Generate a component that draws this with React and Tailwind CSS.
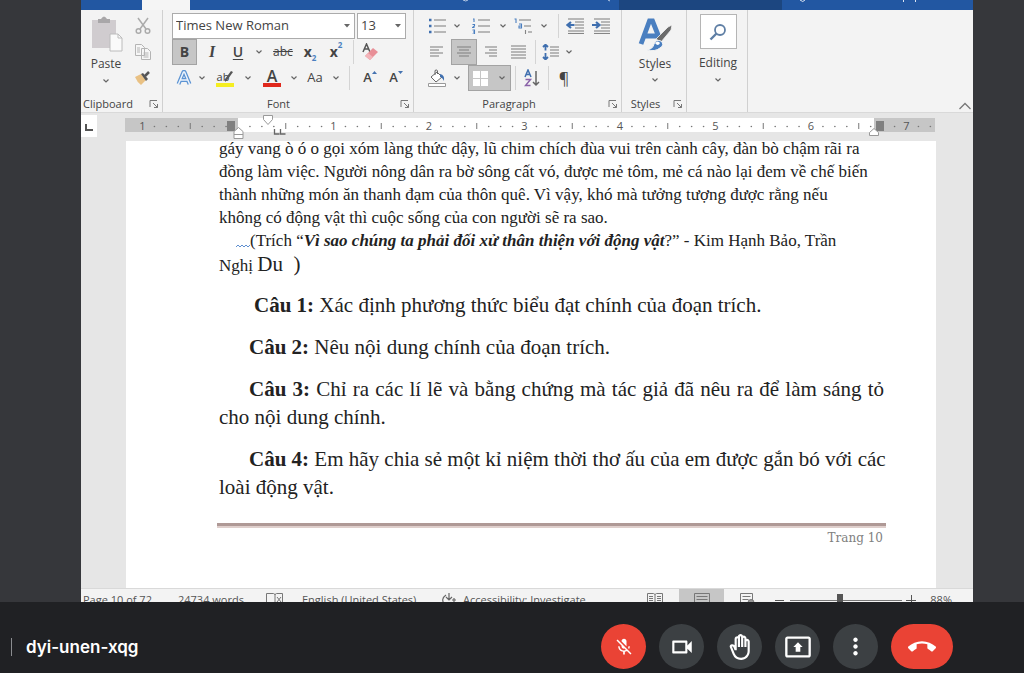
import clsx from "clsx";
import {
  MdCallEnd,
  MdMicOff,
  MdMoreVert,
  MdOutlineBackHand,
  MdOutlinePresentToAll,
  MdOutlineVideocam,
} from "react-icons/md";

function Chevron() {
  return (
    <svg viewBox="0 0 8 6" className="w-2 h-1.5 shrink-0" fill="none" stroke="#666" strokeWidth="1.2">
      <path d="M1.5 1.5 4 4 6.5 1.5" />
    </svg>
  );
}

function Tool({ label, className, active, children }) {
  return (
    <button
      type="button"
      aria-label={label}
      className={clsx(
        "h-[26px] shrink-0 flex items-center justify-center",
        active && "bg-[#c6c6c6] border border-[#a3a3a3]",
        className
      )}
    >
      {children}
    </button>
  );
}

function More({ label, className = "w-3" }) {
  return (
    <Tool label={label} className={className}>
      <Chevron />
    </Tool>
  );
}

function Divider({ className }) {
  return (
    <span className={clsx("h-6 shrink-0 flex justify-center", className)}>
      <span className="w-px h-full bg-[#d4d4d4]" />
    </span>
  );
}

function GroupLabel({ children, className, align = "text-center" }) {
  return (
    <div className={clsx("flex-1 flex items-end text-[11px] leading-4 text-[#444]", className)}>
      <span className={clsx("flex-1", align)}>{children}</span>
      <button type="button" aria-label={`${children} settings`} className="pb-[3px]">
        <svg viewBox="0 0 10 10" className="w-2.5 h-2.5" fill="none" stroke="#777">
          <path d="M1 8V1.5h7M4 4l4.5 4.5M8.5 5v3.5H5" />
        </svg>
      </button>
    </div>
  );
}

function Lines({ rows, className = "w-[18px] h-4", children }) {
  return (
    <svg viewBox="0 0 18 16" className={className} fill="none" stroke="#858585" strokeWidth="1.1">
      {rows.map(([x1, x2, y]) => (
        <path key={y} d={`M${x1} ${y}H${x2}`} />
      ))}
      {children}
    </svg>
  );
}

function TitleBar() {
  return (
    <div className="h-2.5 flex bg-[#2257a2]">
      <div className="w-[61px]" />
      <div className="w-12 bg-[#f5f5f5]" />
      <div className="w-[429px]">
        <svg viewBox="0 0 429 10" className="w-full h-full" fill="none" stroke="#b9cbe5">
          <path d="M273 0q3 2 5 0M418 0l2 1" />
        </svg>
      </div>
      <div className="w-[163px] bg-[#1c4680]" />
      <svg viewBox="0 0 190 10" className="w-[190px] h-full" fill="none" stroke="#dbe5f3">
        <path d="M18 0q3 3 5 0M121.500 0v2M133.500 0v2" />
      </svg>
    </div>
  );
}

function Clipboard() {
  return (
    <section className="w-[82px] flex flex-col border-r border-[#d0d0d0]">
      <div className="h-[81px] flex">
        <button type="button" className="w-[50px] pt-1.5 flex flex-col items-center text-xs text-[#444]">
          <svg viewBox="0 0 34 38" className="w-[34px] h-[38px] shrink-0">
            <path d="M3 4h24v28H3z" fill="#d0cccf" />
            <path d="M9 3h3q3-5 6 0h3v4H9z" fill="#a9a7a9" />
            <path d="M21 18h8l4 4v13H21z" fill="#fafafa" stroke="#bcbcbc" />
            <path d="M29 18v4h4" fill="none" stroke="#bcbcbc" />
          </svg>
          <span className="leading-5">Paste</span>
          <span className="pt-1"><Chevron /></span>
        </button>
        <div className="w-6 pt-[3px] flex flex-col items-center">
          <Tool label="Cut" className="w-6">
            <svg viewBox="0 0 16 18" className="w-4 h-[18px]" fill="none" stroke="#aaa" strokeWidth="1.500">
              <path d="M3 1l8 11M13 1L5 12" />
              <circle cx="3.500" cy="14" r="2.300" />
              <circle cx="12.500" cy="14" r="2.300" />
            </svg>
          </Tool>
          <Tool label="Copy" className="w-6">
            <svg viewBox="0 0 18 18" className="w-[18px] h-[18px]" fill="#f6f6f6" stroke="#b4b4b4">
              <path d="M1.500 1.500h6l3 3v8h-9zM7.500 5.500h6l3 3v8h-9z" />
              <path d="M3 5h3M3 7h3M3 9h3M9.500 10h5M9.500 12h5M9.500 14h5" />
            </svg>
          </Tool>
          <Tool label="Format Painter" className="w-6">
            <svg viewBox="0 0 16 16" className="w-4 h-4">
              <path d="M0 7l6-3 5 6-5 5q-4-3-6-8z" fill="#e9c184" />
              <path d="M6 4l2-1 5 6-2 2z" fill="#555" />
              <path d="M10 6l4-4" stroke="#555" strokeWidth="2.500" />
            </svg>
          </Tool>
        </div>
      </div>
      <GroupLabel align="text-left" className="pl-0.5 pr-[3px]">Clipboard</GroupLabel>
    </section>
  );
}

function SelectBox({ label, value, className }) {
  return (
    <label className={clsx("relative h-[26px] flex bg-white border border-[#ababab]", className)}>
      <select
        aria-label={label}
        defaultValue={value}
        className="w-full appearance-none bg-transparent pl-[3px] text-[13px] text-[#444] outline-none"
      >
        <option>{value}</option>
      </select>
      <svg viewBox="0 0 6 4" className="absolute right-1 top-2.5 w-1.5 h-1 pointer-events-none" fill="#666">
        <path d="M0 0h6L3 3.500z" />
      </svg>
    </label>
  );
}

function FontGroup() {
  return (
    <section className="w-[251px] pl-[9px] flex flex-col border-r border-[#d0d0d0] text-[#444]">
      <div className="mt-[3px] flex gap-0.5">
        <SelectBox label="Font" value="Times New Roman" className="w-[183px]" />
        <SelectBox label="Font Size" value="13" className="w-[49px]" />
      </div>
      <div className="flex items-center">
        <Tool label="Bold" active className="w-[25px] text-sm font-bold">B</Tool>
        <Tool label="Italic" className="w-[30px] font-['Liberation_Serif',serif] text-base font-bold italic">I</Tool>
        <Tool label="Underline" className="w-[22px] text-sm font-semibold underline underline-offset-2">U</Tool>
        <More label="Underline style" className="w-5" />
        <Tool label="Strikethrough" className="w-7 text-xs line-through">abc</Tool>
        <Tool label="Subscript" className="w-[26px] text-sm font-bold">
          x<sub className="pt-2 text-[8px] text-[#4a7fc0]">2</sub>
        </Tool>
        <Tool label="Superscript" className="w-[26px] text-sm font-bold">
          x<sup className="pb-1.5 text-[8px] text-[#4a7fc0]">2</sup>
        </Tool>
        <Divider className="w-2" />
        <Tool label="Clear Formatting" className="w-7">
          <svg viewBox="0 0 18 18" className="w-[18px] h-[18px]" fill="none">
            <path d="M1 9 4.500 1 8 9M2.500 6h4" stroke="#555" strokeWidth="1.500" />
            <path d="M3 13l8-8 5 4-8 8z" fill="#e88f97" />
            <path d="M3 13l3-3 5 4-3 3z" fill="#f3b4b9" />
          </svg>
        </Tool>
      </div>
      <div className="flex items-center">
        <Tool label="Text Effects" className="w-6">
          <svg viewBox="0 0 16 16" className="w-4 h-4 overflow-visible" fill="none" strokeLinejoin="round">
            <path d="M2.500 14 7.500 2h1l5 12M4.500 10h7" stroke="#5b93d3" strokeWidth="4" />
            <path d="M2.500 14 7.500 2h1l5 12M4.500 10h7" stroke="#eef4fb" strokeWidth="1.500" />
          </svg>
        </Tool>
        <More label="Text effect options" />
        <Tool label="Highlight" className="w-[34px]">
          <span className="flex flex-col items-center">
            <span className="flex text-[11px] leading-[13px]">
              ab
              <svg viewBox="0 0 8 13" className="w-2 h-[13px] -ml-1" fill="#555">
                <path d="M8 2 3 9l-3 3V9l6-8z" />
              </svg>
            </span>
            <span className="w-[18px] h-1 bg-[#f5ee21]" />
          </span>
        </Tool>
        <More label="Highlight color" />
        <Tool label="Font Color" className="w-9">
          <span className="flex flex-col items-center">
            <span className="text-base leading-[14px] font-semibold">A</span>
            <span className="w-[18px] h-1 bg-[#e0281c]" />
          </span>
        </Tool>
        <More label="Font color options" className="w-2" />
        <Tool label="Change Case" className="w-[34px] text-[13px]">Aa</Tool>
        <More label="Case options" className="w-2" />
        <Divider className="w-[18px]" />
        <Tool label="Grow Font" className="w-6 text-[13px] font-semibold">
          A
          <svg viewBox="0 0 5 3" className="w-[5px] h-[3px] mb-3" fill="#4472b0"><path d="M0 3 2.500 0 5 3z" /></svg>
        </Tool>
        <Tool label="Shrink Font" className="w-7 text-[13px] font-semibold">
          A
          <svg viewBox="0 0 5 3" className="w-[5px] h-[3px] mb-3" fill="#4472b0"><path d="M0 0h5L2.500 3z" /></svg>
        </Tool>
      </div>
      <GroupLabel className="-ml-[15px] pr-[3px]">Font</GroupLabel>
    </section>
  );
}

function ParagraphGroup() {
  return (
    <section className="w-[208px] pl-2.5 flex flex-col border-r border-[#d0d0d0] text-[#444]">
      <div className="mt-[3px] flex items-center">
        <Tool label="Bullets" className="w-[26px]">
          <Lines rows={[[6, 18, 2], [6, 18, 8], [6, 18, 14]]}>
            <path d="M1 2h2.500M1 8h2.500M1 14h2.500" stroke="#3f6faf" strokeWidth="2.500" />
          </Lines>
        </Tool>
        <More label="Bullet options" className="w-3.5" />
        <Tool label="Numbering" className="w-[34px]">
          <Lines rows={[[6, 18, 2], [6, 18, 8], [6, 18, 14]]}>
            <path d="M1 1h1v3M.500 6.500h2v1.500l-2 1.500h2M.500 12h2v4h-2M1 14h1.500" stroke="#4a7fc0" />
          </Lines>
        </Tool>
        <More label="Numbering options" className="w-2.5" />
        <Tool label="Multilevel List" className="w-[30px]">
          <Lines rows={[[5, 17, 2], [10, 17, 8], [14, 18, 14]]}>
            <path d="M.500 1h1.500v4M5 6h2.500v4H5V8h2" stroke="#4a7fc0" />
            <path d="M11.500 12v4" />
          </Lines>
        </Tool>
        <More label="List options" />
        <Divider className="w-4" />
        <Tool label="Decrease Indent" className="w-[18px]">
          <Lines rows={[[2, 18, 1], [9, 18, 4], [9, 18, 7], [9, 18, 10], [2, 18, 13], [2, 18, 15.5]]}>
            <path d="M8.500 7H2M5 4 1.500 7 5 10" stroke="#3f6faf" strokeWidth="2.200" />
          </Lines>
        </Tool>
        <Tool label="Increase Indent" className="w-[34px]">
          <Lines rows={[[2, 18, 1], [9, 18, 4], [9, 18, 7], [9, 18, 10], [2, 18, 13], [2, 18, 15.5]]}>
            <path d="M0 7h6.500M4 4 7.500 7 4 10" stroke="#3f6faf" strokeWidth="2.200" />
          </Lines>
        </Tool>
      </div>
      <div className="flex items-center">
        <Tool label="Align Left" className="w-[27px]">
          <Lines rows={[[1, 14, 3], [1, 10, 6], [1, 14, 9], [1, 10, 12]]} />
        </Tool>
        <Tool label="Center" active className="w-[26px]">
          <Lines rows={[[2, 16, 3], [4, 14, 6], [2, 16, 9], [4, 14, 12]]} />
        </Tool>
        <Tool label="Align Right" className="w-7">
          <Lines rows={[[3, 15, 3], [7, 15, 6], [3, 15, 9], [7, 15, 12]]} />
        </Tool>
        <Tool label="Justify" className="w-[26px]">
          <Lines rows={[[2, 17, 2], [2, 17, 5], [2, 17, 8], [2, 17, 11], [2, 17, 14]]} />
        </Tool>
        <Divider className="w-2" />
        <Tool label="Line Spacing" className="w-6">
          <Lines rows={[[8, 17, 3], [8, 17, 6], [8, 17, 9], [8, 17, 12]]}>
            <path d="M3.500 0v6.500M1 3l2.500-2.500L6 3M3.500 9v7M1 13l2.500 2.500L6 13" stroke="#3f6faf" strokeWidth="1.800" />
          </Lines>
        </Tool>
        <More label="Line spacing options" />
      </div>
      <div className="flex items-center">
        <Tool label="Shading" className="w-[26px]">
          <svg viewBox="0 0 18 18" className="w-[18px] h-[18px]" fill="none">
            <path d="M3 8l6-5 5 5-6 5z" fill="#fff" stroke="#666" />
            <path d="M7 6V1.500q2-1.500 2.500.500V5" stroke="#666" />
            <path d="M12 5q5 1 4 7-2-4-4-4z" fill="#3f6faf" />
            <path d="M.500 14.500h17v3H.500z" fill="#fff" stroke="#999" />
          </svg>
        </Tool>
        <More label="Shading color" className="w-3.5" />
        <Tool label="Borders" active className="w-[43px] ml-1 gap-2.5">
          <svg viewBox="0 0 15 15" className="w-[15px] h-[15px]" fill="#fff">
            <path d="M0 0h7v7H0zM8 0h7v7H8zM0 8h7v7H0zM8 8h7v7H8z" />
          </svg>
          <Chevron />
        </Tool>
        <Divider className="w-2" />
        <Tool label="Sort" className="w-[26px]">
          <svg viewBox="0 0 16 18" className="w-4 h-[18px]" fill="none" strokeWidth="1.500">
            <path d="M1 8 4 1l3 7M2 5.500h4" stroke="#3f6faf" />
            <path d="M1.500 10.500h5l-5 6h5" stroke="#8a62a8" />
            <path d="M12 2v14M9 13l3 3 3-3" stroke="#666" />
          </svg>
        </Tool>
        <Divider className="w-1.5" />
        <Tool label="Show paragraph marks" className="w-[26px] text-base">¶</Tool>
      </div>
      <GroupLabel className="-ml-3.5 pr-[3px]">Paragraph</GroupLabel>
    </section>
  );
}

function StylesGroup() {
  return (
    <section className="w-[65px] pl-0.5 flex flex-col border-r border-[#d0d0d0] text-[#444]">
      <button type="button" className="h-[81px] pt-[7px] flex flex-col items-center text-xs">
        <svg viewBox="0 0 34 36" className="w-[34px] h-9 shrink-0" fill="none">
          <path d="M3 27 11.500 4h3l8 20M6 19h13" stroke="#4a7fc0" strokeWidth="4.800" />
          <path d="M18 22 30 10l4-2-1 5-10 12z" fill="#6b6b6b" stroke="#f3f3f3" strokeWidth=".800" />
          <path d="M9 33q6-1 7-6 2-5 7-3 4 4-1 7-5 4-13 2z" fill="#4a7fc0" stroke="#f3f3f3" />
          <path d="M17 26q3-3 5 0-2 4-5 0z" fill="#fff" />
        </svg>
        <span className="leading-[22px]">Styles</span>
        <span className="pt-0.5"><Chevron /></span>
      </button>
      <GroupLabel className="-ml-1.5 pr-[3px]">Styles</GroupLabel>
    </section>
  );
}

function Ribbon() {
  return (
    <div className="h-[103px] flex bg-[#f3f3f3] border-b border-[#d9d9d9] font-['Open_Sans',sans-serif]">
      <Clipboard />
      <FontGroup />
      <ParagraphGroup />
      <StylesGroup />
      <section className="w-[61px] border-r border-[#d0d0d0] text-[#444]">
        <button type="button" className="w-full pt-1 pl-0.5 flex flex-col items-center text-xs">
          <span className="w-[37px] h-[35px] flex items-center justify-center bg-white border border-[#b5b5b5]">
            <svg viewBox="0 0 18 18" className="w-[18px] h-[18px]" fill="none" stroke="#5f7fa5" strokeWidth="1.800">
              <circle cx="11" cy="7" r="5" />
              <path d="m7.500 10.500-6 6" strokeWidth="2.400" />
            </svg>
          </span>
          <span className="pt-0.5 leading-6">Editing</span>
          <span className="pt-0.5"><Chevron /></span>
        </button>
      </section>
      <div className="flex-1 flex items-end justify-end pr-0.5 pb-0.5">
        <button type="button" aria-label="Collapse the Ribbon">
          <svg viewBox="0 0 12 8" className="w-3 h-2" fill="none" stroke="#777" strokeWidth="1.300">
            <path d="m.500 7 5.500-5.500L11.500 7" />
          </svg>
        </button>
      </div>
    </div>
  );
}

const INCH = 95.5;
const ZERO = 113;

function Ruler() {
  const marks = [];
  for (let i = -8; i <= 58; i++) {
    const x = ZERO + (i * INCH) / 8;
    if (i === 0) continue;
    if (i % 8 === 0) {
      marks.push(
        <text key={i} x={x} y="17" textAnchor="middle" fontSize="11" fill="#555">
          {Math.abs(i / 8)}
        </text>
      );
    } else if (i % 4 === 0) {
      marks.push(<path key={i} d={`M${x} 10v6`} stroke="#777" />);
    } else {
      marks.push(<circle key={i} cx={x} cy="13.5" r="0.8" fill="#777" />);
    }
  }
  return (
    <div className="h-7 flex bg-[#e6e6e6]">
      <div className="w-4 h-[22px] mt-0.5 pt-1 flex items-center justify-center bg-white">
        <svg viewBox="0 0 8 8" className="w-2 h-2" fill="none" stroke="#555" strokeWidth="2">
          <path d="M1 0v6h7" />
        </svg>
      </div>
      <svg viewBox="0 0 811 28" className="w-[811px] h-7 ml-7 font-['Open_Sans',sans-serif]">
        <path d="M0 5h113v14H0zM749 5h61v14h-61z" fill="#c6c6c6" />
        <path d="M113 5h636v14H113z" fill="#fff" />
        {marks}
        <path d="M102 8h8v10h-8zM751 8h8v10h-8z" fill="#808080" />
        <g fill="#fff" stroke="#999">
          <path d="M138.500 2.500h9v4l-4.500 5-4.500-5z" />
          <path d="m113.500 14.500 4.500 4v7h-9v-7zM109 21.500h9" />
          <path d="m749 15.500 4.500 4v3h-9v-3z" />
        </g>
        <path d="M149.500 16v5h5M155.500 16v5h5" fill="none" stroke="#666" strokeWidth="1.300" />
      </svg>
    </div>
  );
}

function Question({ n, className = "indent-[30px] text-justify", children }) {
  return (
    <p className={clsx("text-[21px] leading-7", className)}>
      <b>Câu {n}:</b> {children}
    </p>
  );
}

function Page() {
  return (
    <main className="flex-1 min-h-0 overflow-hidden pl-[45px] pr-[37px] flex bg-[#e6e6e6]">
      <article className="flex-1 pl-[93px] pr-[52px] bg-white text-[#222] font-['Liberation_Serif',serif]">
        <div className="-mt-1 text-[17px] leading-[23px] whitespace-nowrap">
          <p>
            gáy vang ò ó o gọi xóm làng thức dậy, lũ chim chích đùa vui trên cành cây, đàn bò chậm rãi ra<br />
            đồng làm việc. Người nông dân ra bờ sông cất vó, được mẻ tôm, mẻ cá nào lại đem về chế biến<br />
            thành những món ăn thanh đạm của thôn quê. Vì vậy, khó mà tưởng tượng được rằng nếu<br />
            không có động vật thì cuộc sống của con người sẽ ra sao.
          </p>
          <p className="pl-[17px] flex">
            <svg viewBox="0 0 14 23" className="w-3.5 h-[23px]" fill="none" stroke="#5f8fd0">
              <path d="m0 18 2-2 2 2 2-2 2 2 2-2 2 2 2-2" />
            </svg>
            <span>
              (Trích “<b><i>Vì sao chúng ta phải đối xử thân thiện với động vật</i></b>?” - Kim Hạnh Bảo, Trần
            </span>
          </p>
          <p className="leading-6">
            Nghị <span className="text-[21px] leading-6 whitespace-pre">Du  )</span>
          </p>
        </div>
        <div className="mt-[13px] flex flex-col gap-3.5">
          <Question n={1} className="indent-[35px]">Xác định phương thức biểu đạt chính của đoạn trích.</Question>
          <Question n={2}>Nêu nội dung chính của đoạn trích.</Question>
          <Question n={3}>
            Chỉ ra các lí lẽ và bằng chứng mà tác giả đã nêu ra để làm sáng tỏ cho nội dung chính.
          </Question>
          <Question n={4} className="-mr-4 indent-[30px]">
            Em hãy chia sẻ một kỉ niệm thời thơ ấu của em được gắn bó với các<br />
            loài động vật.
          </Question>
        </div>
        <footer className="mt-[22px] -mx-0.5">
          <div className="h-[5px] bg-[#af9996] border-b-2 border-[#dfcfcc]" />
          <p className="pr-[3px] text-right text-xs leading-5 text-[#808080] font-['DejaVu_Serif',serif]">Trang 10</p>
        </footer>
      </article>
    </main>
  );
}

function StatusBar() {
  return (
    <div className="h-3.5 shrink-0 overflow-hidden bg-[#f3f3f3] border-t border-[#d9d9d9]">
      <div className="h-[22px] pl-0.5 pr-[21px] flex items-center whitespace-nowrap text-[11px] text-[#555] font-['Open_Sans',sans-serif]">
        <span className="w-[95px]">Page 10 of 72</span>
        <span className="w-[88px]">24734 words</span>
        <svg viewBox="0 0 18 14" className="w-[18px] h-3.5 mr-[18px]" fill="none" stroke="#777">
          <path d="M.500 .500h7l1.500 1 1.500-1h6v13H.500zM9 1v12M11 4l4 5M15 4l-4 5" />
        </svg>
        <span className="w-[139px]">English (United States)</span>
        <svg viewBox="0 0 16 14" className="w-4 h-3.5 mr-1.5" fill="none" stroke="#666" strokeWidth="1.200">
          <path d="M4 12Q-1 6 5 2M8 0v6M5 4l3 3 3-3M11 7h4M13 5v4" />
        </svg>
        <span>Accessibility: Investigate</span>
        <span className="flex-1" />
        <button type="button" aria-label="Read Mode" className="mr-4">
          <svg viewBox="0 0 16 14" className="w-4 h-3.5" fill="none" stroke="#777">
            <path d="M.500 .500h6L8 1.500l1.500-1h6v13H.500zM8 1.500V14M2 3.500h4M2 5.500h4M2 7.500h4M10 3.500h4M10 5.500h4M10 7.500h4" />
          </svg>
        </button>
        <button type="button" aria-label="Print Layout" className="w-[45px] h-[22px] mr-4 flex items-center justify-center bg-[#c6c6c6]">
          <svg viewBox="0 0 16 14" className="w-4 h-3.5" fill="none" stroke="#777">
            <path d="M.500 .500h15v13H.500zM2.500 3.500h11M2.500 6.500h11M2.500 9.500h11" />
          </svg>
        </button>
        <button type="button" aria-label="Web Layout" className="mr-5">
          <svg viewBox="0 0 15 14" className="w-[15px] h-3.5" fill="none" stroke="#777">
            <path d="M.500 .500h12v13H.500zM2.500 3.500h8M2.500 6.500h6" />
            <circle cx="11" cy="9.500" r="3" fill="#999" />
          </svg>
        </button>
        <button type="button" aria-label="Zoom Out" className="w-[9px] h-px mr-1.5 bg-[#555]" />
        <input
          type="range"
          aria-label="Zoom"
          min="0"
          max="100"
          defaultValue="44"
          className="w-28 h-px appearance-none bg-[#777] [&::-webkit-slider-thumb]:appearance-none [&::-webkit-slider-thumb]:w-1.5 [&::-webkit-slider-thumb]:h-3 [&::-webkit-slider-thumb]:bg-[#555]"
        />
        <button type="button" aria-label="Zoom In" className="ml-1 mr-3.5">
          <svg viewBox="0 0 10 10" className="w-2.5 h-2.5" stroke="#555"><path d="M0 5.500h10M5.500 0v10" /></svg>
        </button>
        <span>88%</span>
      </div>
    </div>
  );
}

const controls = [
  { label: "Turn on microphone", icon: MdMicOff, size: "w-5 h-5", className: "w-[45px] bg-[#ea4335]" },
  { label: "Turn off camera", icon: MdOutlineVideocam, size: "w-[26px] h-[26px]", className: "w-[45px] bg-[#3c4043]" },
  { label: "Raise hand", icon: MdOutlineBackHand, size: "w-[26px] h-[26px]", className: "w-[45px] bg-[#3c4043]" },
  { label: "Present now", icon: MdOutlinePresentToAll, size: "w-7 h-7", className: "w-[45px] bg-[#3c4043]" },
  { label: "More options", icon: MdMoreVert, size: "w-[27px] h-[27px]", className: "w-[45px] bg-[#3c4043]" },
  { label: "Leave call", icon: MdCallEnd, size: "w-7 h-7", className: "w-[62px] bg-[#ea4335]" },
];

function CallBar() {
  return (
    <div className="h-[71px] shrink-0 pt-[18px] pl-[11px] pr-[71px] flex items-center justify-between bg-[#202124] text-white">
      <div className="flex items-center gap-3.5">
        <span className="w-px h-[18px] bg-[#8b8d90]" />
        <h1 className="font-['Inter',sans-serif] text-[17px] leading-6 font-semibold">dyi-unen-xqg</h1>
      </div>
      <div className="flex gap-[13px]">
        {controls.map(({ label, icon: Icon, size, className }) => (
          <button
            key={label}
            type="button"
            aria-label={label}
            className={clsx("h-[45px] rounded-full flex items-center justify-center", className)}
          >
            <Icon className={size} />
          </button>
        ))}
      </div>
    </div>
  );
}

export default function App() {
  return (
    <div className="h-screen flex flex-col bg-[#36373b]">
      <div className="flex-1 min-h-0 pl-[81px] pr-[51px] flex">
        <div className="flex-1 min-w-0 flex flex-col">
          <TitleBar />
          <Ribbon />
          <Ruler />
          <Page />
          <StatusBar />
        </div>
      </div>
      <CallBar />
    </div>
  );
}
